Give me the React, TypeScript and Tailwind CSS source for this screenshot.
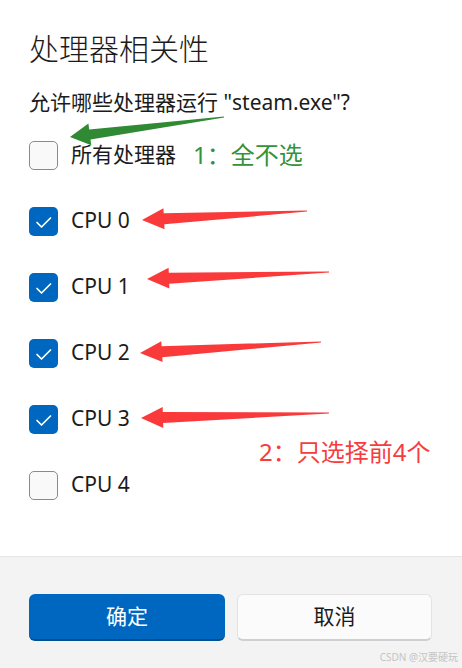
import { useState } from "react";

type Pt = [number, number];

// annotation arrow: tip point, tail point, tapering shaft
function arrow(tip: Pt, tail: Pt, headLen: number, headW: number, shaftW: number) {
  const dx = tail[0] - tip[0];
  const dy = tail[1] - tip[1];
  const len = Math.hypot(dx, dy);
  const ux = dx / len;
  const uy = dy / len;
  const nx = -uy;
  const ny = ux;
  const bx = tip[0] + ux * headLen;
  const by = tip[1] + uy * headLen;
  const pts: Pt[] = [
    tip,
    [bx + nx * headW, by + ny * headW],
    [bx + nx * shaftW, by + ny * shaftW],
    [tail[0] + nx * 0.6, tail[1] + ny * 0.6],
    [tail[0] - nx * 0.6, tail[1] - ny * 0.6],
    [bx - nx * shaftW, by - ny * shaftW],
    [bx - nx * headW, by - ny * headW],
  ];
  return pts.map((p) => p[0].toFixed(1) + "," + p[1].toFixed(1)).join(" ");
}

const redArrows: [Pt, Pt][] = [
  [[142, 220], [307, 211]],
  [[147, 279], [329, 272]],
  [[140, 353], [321, 342]],
  [[141, 418], [329, 413]],
];

function CheckBox({ checked }: { checked: boolean }) {
  if (checked) {
    return (
      <div className="w-[29px] h-[29px] rounded-[5px] bg-[#0067c0] shrink-0 flex">
        <svg width="29" height="29" viewBox="0 0 29 29">
          <path d="M8 15.5 L12.5 20 L21.5 11" fill="none" stroke="#fff" strokeWidth="1.7" strokeLinecap="round" strokeLinejoin="round" />
        </svg>
      </div>
    );
  }
  return <div className="w-[29px] h-[29px] rounded-[5px] bg-[#f9f9f9] border-[1.5px] border-[#8a8a8a] shrink-0" />;
}

export default function App() {
  const [cpus, setCpus] = useState([true, true, true, true, false]);
  const [all, setAll] = useState(false);

  return (
    <div
      className="relative w-[462px] h-[668px] flex flex-col bg-white text-[#1b1b1b] overflow-hidden"
      style={{ fontFamily: '"Noto Sans", "Noto Sans CJK SC", sans-serif' }}
    >
      <div className="flex-1 flex flex-col pl-[29px] pt-[29px]">
        <div className="text-[30px] leading-[40px] font-light">处理器相关性</div>
        <div className="text-[21px] leading-[28px] mt-[19px]">允许哪些处理器运行 "steam.exe"?</div>
        <div className="mt-[6px] flex flex-col">
          <div className="h-[66px] flex items-center" onClick={() => setAll(!all)}>
            <CheckBox checked={all} />
            <span className="ml-[13px] text-[21px]">所有处理器</span>
            <span className="ml-[17px] text-[24px] text-[#34923a]">1：全不选</span>
          </div>
          {cpus.map((c, i) => (
            <div
              key={i}
              className="h-[66px] flex items-center"
              onClick={() => setCpus(cpus.map((v, j) => (j === i ? !v : v)))}
            >
              <CheckBox checked={c} />
              <span className="ml-[13px] text-[21px]">CPU {i}</span>
            </div>
          ))}
        </div>
      </div>

      <div className="h-[112px] shrink-0 bg-[#f3f3f3] border-t border-[#e5e5e5] flex flex-col">
        <div className="flex gap-[12px] pl-[29px] pr-[30px] pt-[37px]">
          <button className="w-[196px] h-[47px] rounded-[6px] bg-[#0067c0] border-b-2 border-[#00508f] text-white text-[21px]">
            确定
          </button>
          <button className="flex-1 h-[47px] rounded-[6px] bg-[#fbfbfb] border border-[#e3e3e3] border-b-[#cfcfcf] border-b-2 text-[21px]">
            取消
          </button>
        </div>
        <div className="mt-[9px] pr-[4px] text-right text-[10px] leading-[14px] text-[#c4c4c4]">CSDN @汉要硬玩</div>
      </div>

      {/* annotations on top of the screenshot */}
      <svg className="absolute inset-0 pointer-events-none" width="462" height="668">
        <polygon points={arrow([70, 137], [224, 117], 20, 11, 5)} fill="#2f8a33" />
        {redArrows.map(([t, s], i) => (
          <polygon key={i} points={arrow(t, s, 22, 10.5, 5.5)} fill="#fa3a3a" />
        ))}
      </svg>
      <div className="absolute left-[259px] top-[436px] text-[24px] leading-[32px] text-[#f63d3d]">2：只选择前4个</div>
    </div>
  );
}
